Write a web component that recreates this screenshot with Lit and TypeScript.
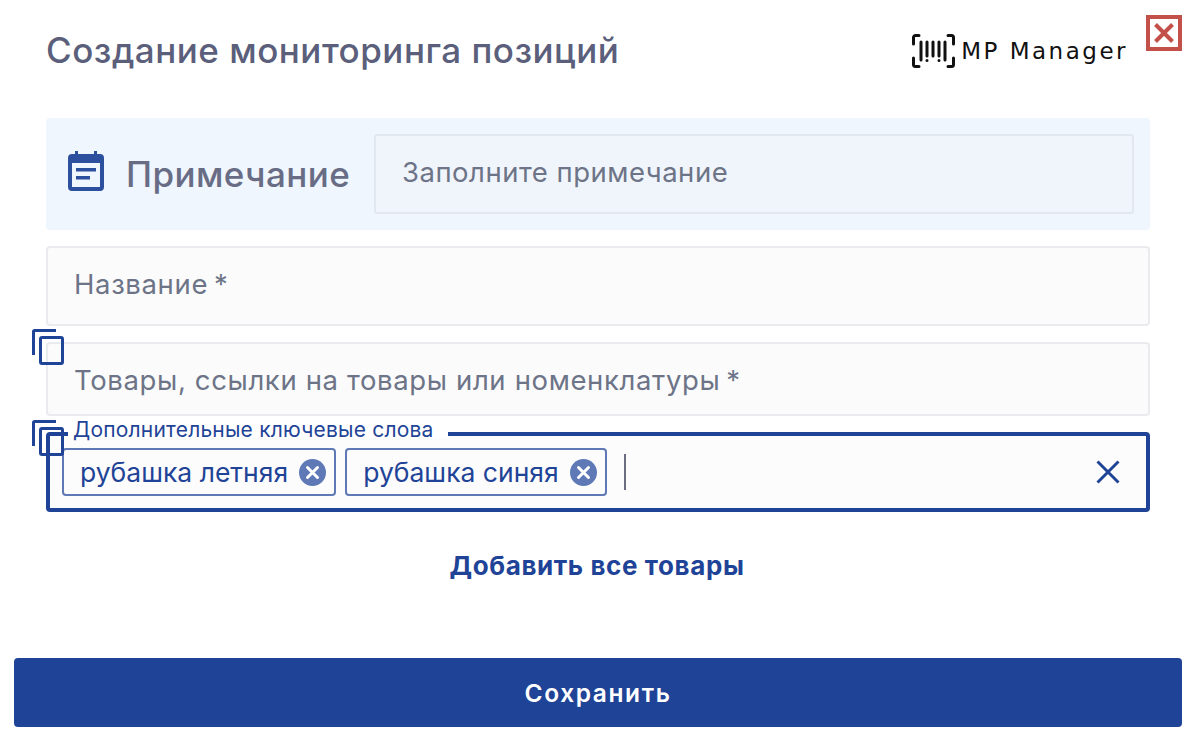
import { LitElement, html, css, svg } from "lit";
import { customElement } from "lit/decorators.js";

const copyIcon = svg`<svg class="copy" width="34" height="38" viewBox="0 0 34 38" fill="none" stroke="#1f4497" stroke-width="3"><path d="M1.500 26V2.500a1 1 0 0 1 1-1H24"/><rect x="8.500" y="8.500" width="22" height="26" rx="1.500"/></svg>`;

const chipClose = svg`<svg class="chipx" width="27" height="27" viewBox="0 0 27 27"><circle cx="13.500" cy="13.500" r="13.500" fill="#5f79b6"/><path d="M8.500 8.500l10 10M18.500 8.500l-10 10" stroke="#fff" stroke-width="3" stroke-linecap="round"/></svg>`;

@customElement("app-root")
export class AppRoot extends LitElement {
  static styles = css`
    :host { display: block; width: 1202px; height: 740px; background: #fff; font-family: Inter, "Liberation Sans", sans-serif; overflow: hidden; position: relative; }
    * { box-sizing: border-box; }
    .page { display: flex; flex-direction: column; height: 740px; padding: 0 20px 13px 14px; }
    .head { height: 118px; display: flex; align-items: flex-start; padding: 27px 0 0 32px; flex: none; }
    h1 { margin: 0; font-size: 35px; letter-spacing: .5px; line-height: 46px; font-weight: 500; color: #5b5f7b; flex: 1; white-space: nowrap; }
    .logo { display: flex; align-items: center; gap: 6px; margin: 7px 56px 0 0; }
    .logo span { font-family: "DejaVu Sans", sans-serif; font-size: 23px; letter-spacing: 2.500px; margin-right: -2px; color: #111; white-space: nowrap; }
    .closebox { position: absolute; left: 1146px; top: 15px; width: 36px; height: 36px; }
    .body { display: flex; flex-direction: column; margin: 0 32px; gap: 16px; }
    .note { height: 112px; background: #f0f6fd; border-radius: 4px; display: flex; align-items: center; padding: 0 16px 0 22px; }
    .note svg { flex: none; margin-bottom: 6px; }
    .note .lbl { font-size: 35px; letter-spacing: .4px; font-weight: 500; color: #686d85; margin-left: 22px; width: 248px; white-space: nowrap; }
    .note .inp { flex: 1; height: 80px; background: #f0f5fc; border: 2px solid #e3e8ef; border-radius: 3px; padding: 0 26px 5px; display: flex; align-items: center; font-size: 27.500px; letter-spacing: .5px; color: #6d7487; }
    .field { background: #fbfbfc; border: 2px solid #e9ebee; border-radius: 4px; display: flex; align-items: center; font-size: 27.500px; letter-spacing: .63px; color: #6d7487; position: relative; white-space: nowrap; }
    .f1 { height: 80px; padding: 0 26px 4px; }
    .f2 { height: 74px; padding: 2px 26px 0; }
    .ast { margin-left: 6px; }
    .copy { position: absolute; left: -16px; top: -15px; }
    .kw { height: 80px; background: #fcfcfd; border: 4px solid #1f4497; border-radius: 4px; position: relative; display: flex; align-items: center; gap: 9px; padding: 0 12px; }
    .legend { position: absolute; left: 18px; top: -18px; height: 20px; padding: 0 14px 0 5px; background: #fff; font-size: 21px; letter-spacing: .2px; line-height: 24px; color: #1f4497; white-space: nowrap; }
    .kw .copy { left: -18px; top: -16px; z-index: 1; }
    .chip { height: 48px; border: 2px solid #5f79b6; border-radius: 4px; display: flex; align-items: center; gap: 11px; padding: 0 8px 0 16px; font-size: 26.500px; color: #1f4497; white-space: nowrap; background: #fcfcfd; }
    .caret { width: 2px; height: 36px; background: #6a6e80; margin-left: 8px; }
    .clr { margin-left: auto; margin-right: 14px; display: block; }
    .add { height: 98px; display: flex; align-items: center; justify-content: center; margin-top: 4px; font-size: 26px; font-weight: 700; color: #1f4497; letter-spacing: .6px; padding-right: 2px; }
    .spacer { flex: 1; }
    .save { flex: none; height: 69px; border-radius: 4px; background: #1f4497; color: #fff; display: flex; align-items: center; justify-content: center; font-size: 24.500px; font-weight: 600; letter-spacing: 1.600px; }
  `;

  render() {
    return html`
      <div class="page">
        <div class="head">
          <h1>Создание мониторинга позиций</h1>
          <div class="logo">
            <svg width="43" height="34" viewBox="0 0 43 34" fill="none" stroke="#111" stroke-width="3" stroke-linecap="round">
              <path d="M7 1.500H3.500a2 2 0 0 0-2 2V10M36 1.500h3.500a2 2 0 0 1 2 2V10M7 32.500H3.500a2 2 0 0 1-2-2V24M36 32.500h3.500a2 2 0 0 0 2-2V24"/>
              <path d="M9 8v18M15 8v14M21 8v14M27 8v14M33 8v18M15 26.500v.1M27 26.500v.1"/>
            </svg>
            <span>MP Manager</span>
          </div>
        </div>
        <svg class="closebox" viewBox="0 0 36 36" fill="none" stroke="#c4504a">
          <rect x="2" y="2" width="32" height="32" stroke-width="4"/>
          <path d="M9.500 9.500l17 17M26.500 9.500l-17 17" stroke-width="4"/>
        </svg>
        <div class="body">
          <div class="note">
            <svg width="36" height="40" viewBox="0 0 36 40">
              <path fill="#2c4f9e" d="M7 0h3v3h16V0h3v3h3a4 4 0 0 1 4 4v29a4 4 0 0 1-4 4H4a4 4 0 0 1-4-4V7a4 4 0 0 1 4-4h3z"/>
              <rect x="4" y="12" width="28" height="24" fill="#f0f6fd"/>
              <rect x="8" y="17" width="20" height="3.500" fill="#2c4f9e"/>
              <rect x="8" y="25" width="14" height="3.500" fill="#2c4f9e"/>
            </svg>
            <div class="lbl">Примечание</div>
            <div class="inp">Заполните примечание</div>
          </div>
          <div class="field f1">Название<span class="ast">*</span></div>
          <div class="field f2">${copyIcon}Товары, ссылки на товары или номенклатуры<span class="ast">*</span></div>
          <div class="kw">
            <div class="legend">Дополнительные ключевые слова</div>
            ${copyIcon}
            <div class="chip">рубашка летняя ${chipClose}</div>
            <div class="chip">рубашка синяя ${chipClose}</div>
            <div class="caret"></div>
            <svg class="clr" width="24" height="24" viewBox="0 0 24 24" fill="none" stroke="#1f4497" stroke-width="3"><path d="M1.500 1.500l21 21M22.500 1.500l-21 21"/></svg>
          </div>
        </div>
        <div class="add">Добавить все товары</div>
        <div class="spacer"></div>
        <div class="save">Сохранить</div>
      </div>
    `;
  }
}
